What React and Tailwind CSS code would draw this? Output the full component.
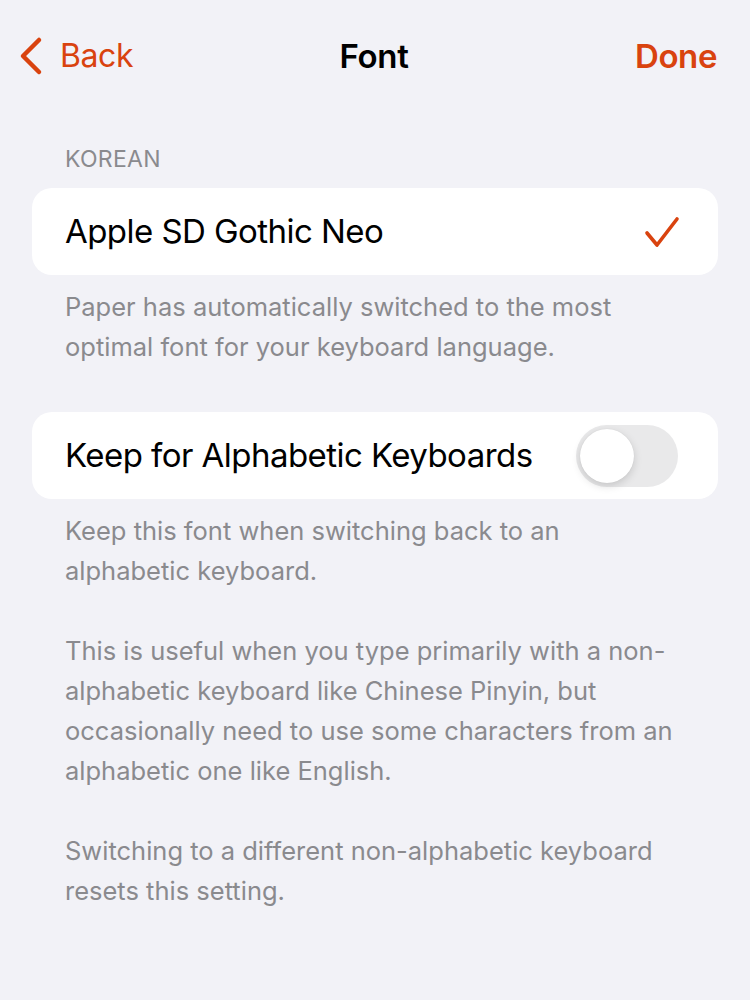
import React, { useState } from "react";

const Footer = ({ children }) => (
  <p className="pl-[65px] pr-[62px] text-[25.5px] leading-[40px] text-[#8a8a8e] tracking-[0px]">
    {children}
  </p>
);

const App = () => {
  const [keep, setKeep] = useState(false);

  return (
    <div
      className="w-full min-h-screen bg-[#f2f2f7] text-black"
      style={{ fontFamily: "Inter, 'Noto Sans', sans-serif" }}
    >
      {/* nav bar */}
      <div className="h-[112px] flex items-start pt-[36px] px-[18px]">
        <button className="flex items-center gap-[16px] text-[#d9430f]">
          <svg width="26" height="40" viewBox="0 0 26 40" fill="none">
            <path
              d="M21 4 L5 20 L21 36"
              stroke="#d9430f"
              strokeWidth="4.5"
              strokeLinecap="round"
              strokeLinejoin="round"
            />
          </svg>
          <span className="text-[32px] leading-[40px] tracking-[-0.4px]">Back</span>
        </button>
        <div className="flex-1 text-center text-[33px] leading-[40px] font-semibold tracking-[-0.3px] pr-[20px]">
          Font
        </div>
        <button className="text-[33px] leading-[40px] font-semibold text-[#d9430f] tracking-[-0.4px] pr-[15px]">
          Done
        </button>
      </div>

      {/* section header */}
      <div className="px-[65px] text-[23px] leading-[28px] text-[#8a8a8e] tracking-[0.3px] mt-[33px] mb-[15px]">
        KOREAN
      </div>

      <div className="mx-[32px] bg-white rounded-[20px] h-[87px] flex items-center justify-between pl-[33px] pr-[38px]">
        <span className="text-[33px] tracking-[-0.55px]">Apple SD Gothic Neo</span>
        <svg width="36" height="32" viewBox="0 0 36 32" fill="none">
          <path
            d="M3 17 L13 29 L33 3"
            stroke="#d9430f"
            strokeWidth="3.6"
            strokeLinecap="round"
            strokeLinejoin="round"
          />
        </svg>
      </div>

      <div className="mt-[12px]">
        <Footer>
          Paper has automatically switched to the most optimal font for your keyboard language.
        </Footer>
      </div>

      <div className="mt-[45px] mx-[32px] bg-white rounded-[20px] h-[87px] flex items-center justify-between pl-[33px] pr-[40px]">
        <span className="text-[33px] tracking-[-0.55px]">Keep for Alphabetic Keyboards</span>
        <button
          onClick={() => setKeep(!keep)}
          className={
            "w-[102px] h-[62px] rounded-full p-[4px] flex items-center " +
            (keep ? "bg-[#34c759] justify-end" : "bg-[#e9e9ea] justify-start")
          }
        >
          <span className="w-[54px] h-[54px] rounded-full bg-white shadow-[0_3px_8px_rgba(0,0,0,0.15),0_0_1px_rgba(0,0,0,0.1)]" />
        </button>
      </div>

      <div className="mt-[12px] flex flex-col gap-[40px]">
        <Footer>Keep this font when switching back to an alphabetic keyboard.</Footer>
        <Footer>
          This is useful when you type primarily with a non-alphabetic keyboard like Chinese Pinyin, but
          occasionally need to use some characters from an alphabetic one like English.
        </Footer>
        <Footer>Switching to a different non-alphabetic keyboard resets this setting.</Footer>
      </div>
    </div>
  );
};

export default App;
